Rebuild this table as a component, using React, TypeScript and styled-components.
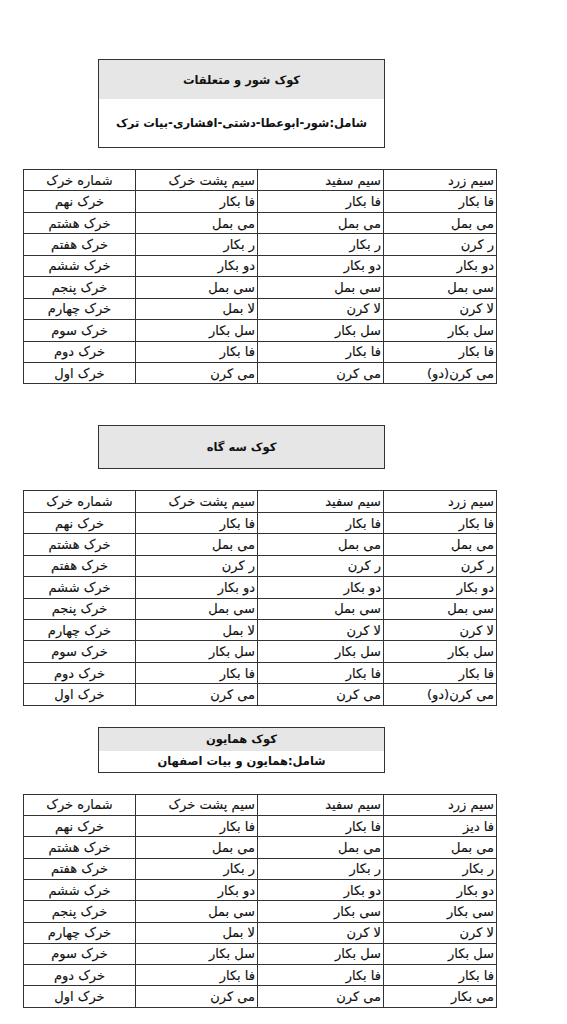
import React from "react";
import styled, { createGlobalStyle } from "styled-components";

const GlobalStyle = createGlobalStyle`
  html, body {
    margin: 0;
    padding: 0;
    background: #ffffff;
  }
  body {
    font-family: "DejaVu Sans", sans-serif;
    color: #111;
  }
`;

const Page = styled.div`
  width: 567px;
  padding-top: 59px;
  display: flex;
  flex-direction: column;
`;

const Section = styled.section<{ $gap: number }>`
  display: flex;
  flex-direction: column;
  margin-bottom: ${({ $gap }) => $gap}px;
`;

const TitleBox = styled.div`
  width: 287px;
  margin-left: 98px;
  border: 1px solid #333;
  box-sizing: border-box;
  display: flex;
  flex-direction: column;
  direction: rtl;
`;

const TitleRow = styled.div<{ $h: number; $gray?: boolean }>`
  height: ${({ $h }) => $h}px;
  display: flex;
  align-items: center;
  justify-content: center;
  background: ${({ $gray }) => ($gray ? "#e6e6e6" : "#ffffff")};
  font-weight: bold;
  font-size: 11.5px;
`;

const Table = styled.table<{ $rowH: number }>`
  margin-top: 21px;
  margin-left: 23px;
  width: 474px;
  border-collapse: collapse;
  direction: rtl;
  table-layout: fixed;
  font-size: 13px;

  td {
    height: ${({ $rowH }) => $rowH}px;
  }
`;

const Cell = styled.td<{ $center?: boolean }>`
  border: 1px solid #333;
  padding: 0 2px;
  text-align: ${({ $center }) => ($center ? "center" : "right")};
  white-space: nowrap;
  line-height: 1;
  -webkit-text-stroke: 0.15px #111;
`;

const headers = ["سیم زرد", "سیم سفید", "سیم پشت خرک", "شماره خرک"];
const widths = [113, 126, 122, 112];
const frets = [
  "خرک نهم",
  "خرک هشتم",
  "خرک هفتم",
  "خرک ششم",
  "خرک پنجم",
  "خرک چهارم",
  "خرک سوم",
  "خرک دوم",
  "خرک اول",
];

type Row = [string, string, string];

const shur: Row[] = [
  ["فا بکار", "فا بکار", "فا بکار"],
  ["می بمل", "می بمل", "می بمل"],
  ["ر کرن", "ر بکار", "ر بکار"],
  ["دو بکار", "دو بکار", "دو بکار"],
  ["سی بمل", "سی بمل", "سی بمل"],
  ["لا کرن", "لا کرن", "لا بمل"],
  ["سل بکار", "سل بکار", "سل بکار"],
  ["فا بکار", "فا بکار", "فا بکار"],
  ["می کرن(دو)", "می کرن", "می کرن"],
];

const segah: Row[] = [
  ["فا بکار", "فا بکار", "فا بکار"],
  ["می بمل", "می بمل", "می بمل"],
  ["ر کرن", "ر کرن", "ر کرن"],
  ["دو بکار", "دو بکار", "دو بکار"],
  ["سی بمل", "سی بمل", "سی بمل"],
  ["لا کرن", "لا کرن", "لا بمل"],
  ["سل بکار", "سل بکار", "سل بکار"],
  ["فا بکار", "فا بکار", "فا بکار"],
  ["می کرن(دو)", "می کرن", "می کرن"],
];

const homayun: Row[] = [
  ["فا دیز", "فا بکار", "فا بکار"],
  ["می بمل", "می بمل", "می بمل"],
  ["ر بکار", "ر بکار", "ر بکار"],
  ["دو بکار", "دو بکار", "دو بکار"],
  ["سی بکار", "سی بکار", "سی بمل"],
  ["لا کرن", "لا کرن", "لا بمل"],
  ["سل بکار", "سل بکار", "سل بکار"],
  ["فا بکار", "فا بکار", "فا بکار"],
  ["می  بکار", "می کرن", "می کرن"],
];

function TuningTable({ rows, rowH }: { rows: Row[]; rowH: number }) {
  return (
    <Table $rowH={rowH}>
      <colgroup>
        {widths.map((w, i) => (
          <col key={i} style={{ width: w }} />
        ))}
      </colgroup>
      <tbody>
        <tr>
          {headers.map((h, i) => (
            <Cell key={h} $center={i === 3}>
              {h}
            </Cell>
          ))}
        </tr>
        {rows.map((r, i) => (
          <tr key={i}>
            <Cell>{r[0]}</Cell>
            <Cell>{r[1]}</Cell>
            <Cell>{r[2]}</Cell>
            <Cell $center>{frets[i]}</Cell>
          </tr>
        ))}
      </tbody>
    </Table>
  );
}

export default function App() {
  return (
    <Page>
      <GlobalStyle />
      <Section $gap={41}>
        <TitleBox>
          <TitleRow $h={39} $gray>
            کوک شور و متعلقات
          </TitleRow>
          <TitleRow $h={48}>شامل:شور-ابوعطا-دشتی-افشاری-بیات ترک</TitleRow>
        </TitleBox>
        <TuningTable rows={shur} rowH={20.45} />
      </Section>

      <Section $gap={21}>
        <TitleBox>
          <TitleRow $h={42} $gray>
            کوک سه گاه
          </TitleRow>
        </TitleBox>
        <TuningTable rows={segah} rowH={20.45} />
      </Section>

      <Section $gap={0}>
        <TitleBox>
          <TitleRow $h={23} $gray>
            کوک همایون
          </TitleRow>
          <TitleRow $h={21}>شامل:همایون و بیات اصفهان</TitleRow>
        </TitleBox>
        <TuningTable rows={homayun} rowH={20.3} />
      </Section>
    </Page>
  );
}
